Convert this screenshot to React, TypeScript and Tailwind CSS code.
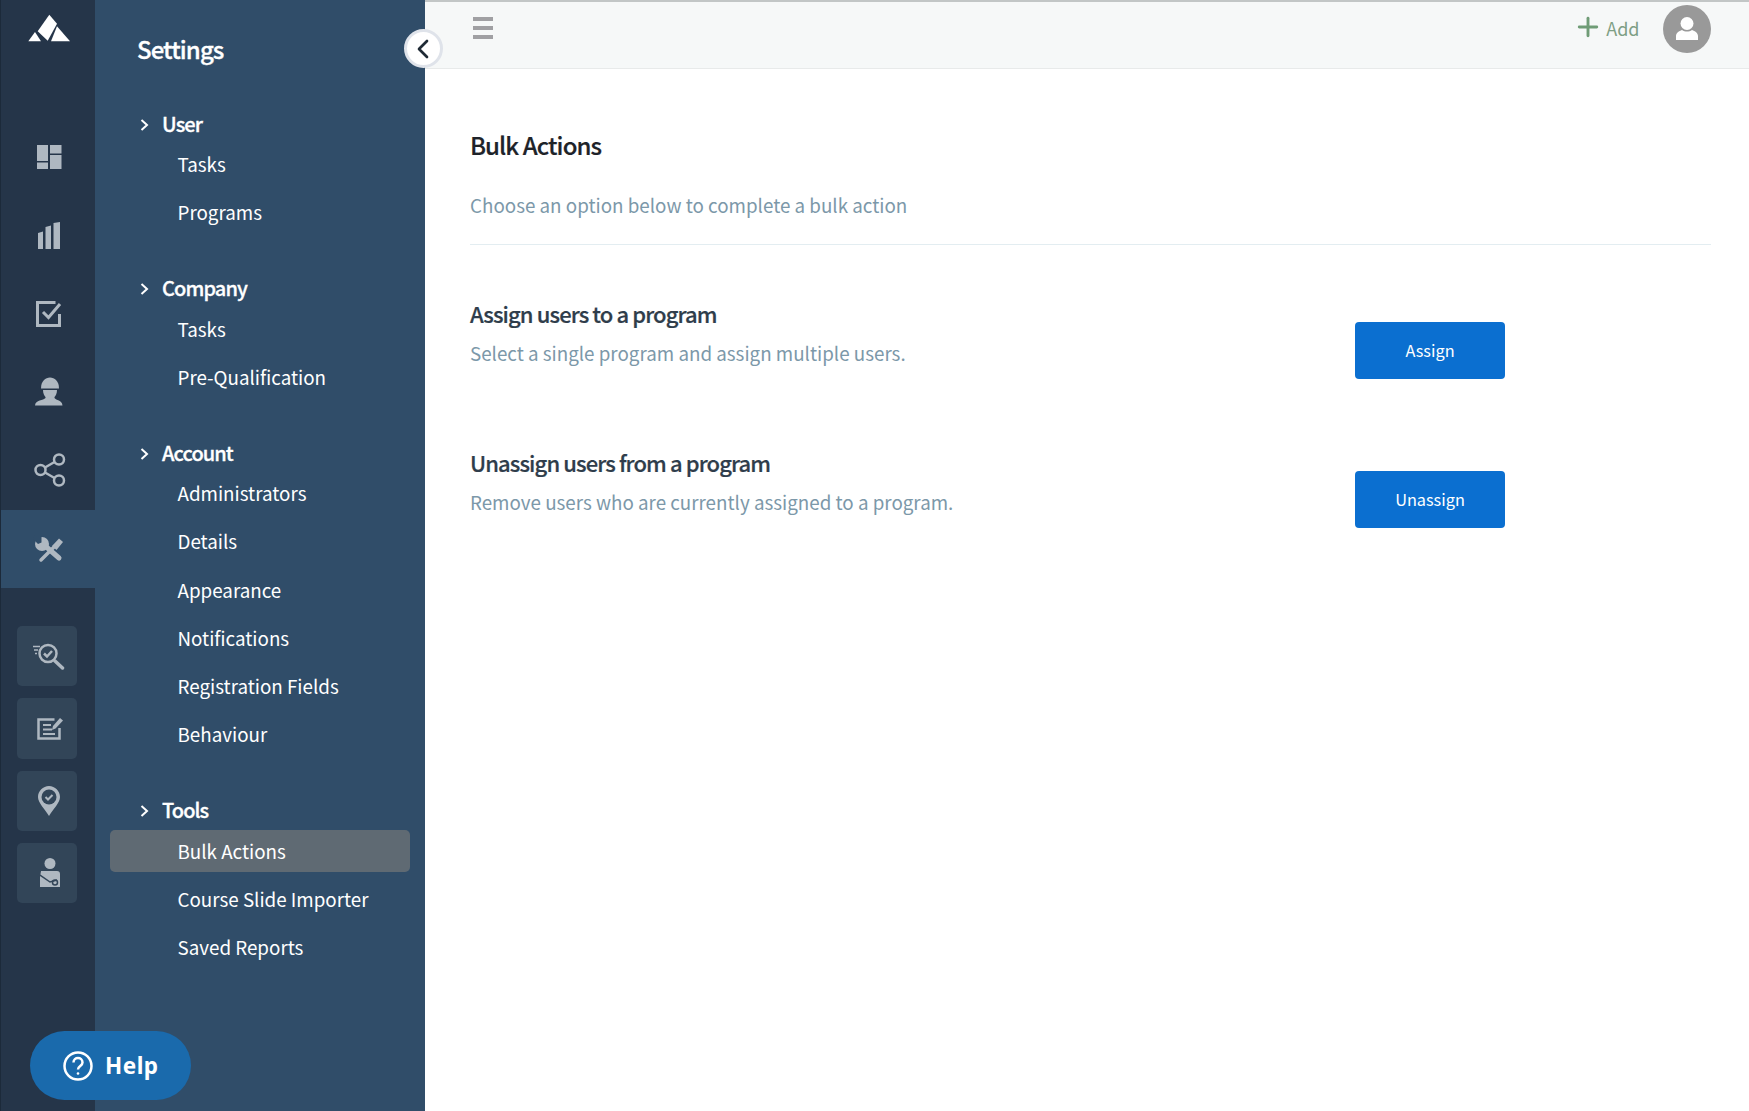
import { ChevronLeft, Plus } from "lucide-react";

const font = { fontFamily: '"Noto Sans CJK JP", "Noto Sans", sans-serif' };

const sections = [
  { title: "User", items: ["Tasks", "Programs"] },
  { title: "Company", items: ["Tasks", "Pre-Qualification"] },
  {
    title: "Account",
    items: ["Administrators", "Details", "Appearance", "Notifications", "Registration Fields", "Behaviour"],
  },
  { title: "Tools", items: ["Bulk Actions", "Course Slide Importer", "Saved Reports"] },
];

const iconFill = "#afb8c1";

function Logo() {
  return (
    <svg width="60" height="40" viewBox="0 0 60 40" fill="#fff">
      <path d="M28.3 6.7 L36 15.7 L26.7 32.7 L16.7 23.3 Z" />
      <path d="M7.3 33.3 L14 24 L20 33.300 Z" />
      <path d="M36 18.300 L49 33.300 L30 33.300 Z" />
    </svg>
  );
}

function Rail() {
  return (
    <div className="flex h-full w-[95px] shrink-0 flex-col border-l border-[#1c2a3a] bg-[#253549]">
      <div className="h-[118px] pl-[20px] pt-[8px]">
        <Logo />
      </div>
      <div className="flex h-[78px] items-center justify-center pl-[2px]">
        <svg width="25" height="24" viewBox="0 0 25 24" fill={iconFill}>
          <path d="M0 0h11v16H0zM0 17.500h11V24H0zM13 0h11.500v8.500H13zM13 10h11.500v14H13z" />
        </svg>
      </div>
      <div className="flex h-[78px] items-center justify-center pl-[2px]">
        <svg width="22" height="27" viewBox="0 0 22 27" fill={iconFill}>
          <path d="M0 11l5-1.500V27H0zM7.500 5l5.500-1.500V27H7.500zM15.500 1L22 0v27h-6.500z" />
        </svg>
      </div>
      <div className="flex h-[79px] items-center justify-center pl-[2px]">
        <svg width="26" height="26" viewBox="0 0 26 26" fill="none" stroke={iconFill} strokeWidth="3">
          <path d="M23.500 13v11.500H1.500V1.500h18" />
          <path d="M7 11l5.500 5.500L24 3" />
        </svg>
      </div>
      <div className="flex h-[78px] items-center justify-center pb-[4px] pl-[4px]">
        <svg width="50" height="40" viewBox="0 0 50 40" fill={iconFill}>
          <path d="M16 18.500C16 11 20.500 7.500 25 7.500S34 11 34 18.500Z" />
          <path d="M18 20H32C32 23.500 30.500 26 29.500 27V28C31 30.500 37 29.500 37.500 35.500H10C10.500 29.500 18.500 30.500 20.500 28V27C19.500 26 18 23.500 18 20Z" />
        </svg>
      </div>
      <div className="flex h-[79px] items-start justify-center pl-[3px] pt-[22px]">
        <svg width="32" height="34" viewBox="0 0 32 34" fill="none" stroke={iconFill} strokeWidth="2.500">
          <circle cx="25" cy="6.500" r="5" />
          <circle cx="6.500" cy="17" r="5" />
          <circle cx="25" cy="27.500" r="5" />
          <path d="M11 14.500l9.500-5.500M11 19.500l9.500 5.500" />
        </svg>
      </div>
      <div className="flex h-[78px] w-[95px] items-center justify-center bg-[#304d69] pl-[4px]">
        <svg width="50" height="40" viewBox="0 0 50 40">
          <path d="M17 15L33 29" stroke={iconFill} strokeWidth="5" strokeLinecap="round" />
          <circle cx="16" cy="15" r="7" fill={iconFill} />
          <path d="M9 6h6.500v7.500L12 15 7 10z" fill="#304d69" />
          <path d="M15 31L29 17" stroke={iconFill} strokeWidth="3.500" strokeLinecap="round" />
          <path d="M26 17L33 9.500l4 3.500-6.500 8z" fill={iconFill} />
        </svg>
      </div>

      <div className="mt-[38px] flex flex-col gap-[12px] pl-[16px]">
        <div className="flex h-[60px] w-[60px] items-center justify-center rounded-[5px] bg-[#324558] pl-[3px]">
          <svg width="32" height="27" viewBox="0 0 32 27" fill="none" stroke={iconFill} strokeWidth="2.500">
            <circle cx="15" cy="10.500" r="8.500" />
            <path d="M11 10.500l3 3 5-5.500" />
            <path d="M22 18l7.500 7" strokeWidth="3.500" strokeLinecap="round" />
            <path d="M0 3.500h7M1 7h4M2 10.500h2" strokeWidth="1.500" />
          </svg>
        </div>
        <div className="flex h-[61px] w-[60px] items-center justify-center rounded-[5px] bg-[#324558] pl-[5px]">
          <svg width="26" height="23" viewBox="0 0 26 23" fill="none" stroke={iconFill} strokeWidth="2.500">
            <path d="M22.500 11v10.500H1.500V2.500h16" />
            <path d="M6 8h8M6 12.500h9M6 17h12" strokeWidth="2" />
            <path d="M15 13l1-4L23 1l3 2.500-7.500 8z" fill={iconFill} stroke="none" />
          </svg>
        </div>
        <div className="flex h-[60px] w-[60px] items-center justify-center rounded-[5px] bg-[#324558] pl-[4px]">
          <svg width="22" height="30" viewBox="0 0 22 30">
            <path d="M11 0C5 0 0 5 0 11C0 17 7 23 11 30C15 23 22 17 22 11C22 5 17 0 11 0Z" fill={iconFill} />
            <circle cx="11" cy="11" r="7.500" fill="#324558" />
            <path d="M7.500 11l2.500 2.500 4.500-4.500" fill="none" stroke={iconFill} strokeWidth="2" />
          </svg>
        </div>
        <div className="flex h-[60px] w-[60px] items-center justify-center rounded-[5px] bg-[#324558] pl-[6px]">
          <svg width="20" height="30" viewBox="0 0 20 30" fill={iconFill}>
            <circle cx="10" cy="5.500" r="5.500" />
            <path d="M1 13h16a3 3 0 0 1 3 3v13H1zM0 19l1-6v16H0z" />
            <path d="M0 17l10 7 7-2" fill="none" stroke="#324558" strokeWidth="1.500" />
            <circle cx="15" cy="24.500" r="2.500" fill="none" stroke="#324558" strokeWidth="1.500" />
          </svg>
        </div>
      </div>
    </div>
  );
}

function Sidebar() {
  return (
    <div className="flex h-full w-[330px] shrink-0 flex-col bg-[#304d69] px-[15px] text-white">
      <div className="flex h-[67px] items-end pl-[27px] text-[24px] font-medium leading-[36px] tracking-[-0.9px] [-webkit-text-stroke:0.3px_#ffffff]">
        Settings
      </div>
      <div className="mt-[39.5px] flex flex-col gap-[37.5px]">
        {sections.map((s) => (
          <div key={s.title}>
            <div className="mb-[3px] flex h-[34px] items-center pl-[30px] text-[20px] font-medium tracking-[-0.9px] [-webkit-text-stroke:0.3px_#ffffff]">
              <svg width="9" height="12" viewBox="0 0 9 12" fill="none" stroke="#fff" strokeWidth="2" className="mr-[13px] mt-[2px] shrink-0">
                <path d="M1.500 1l5.500 5-5.500 5" />
              </svg>
              {s.title}
            </div>
            <div className="flex flex-col gap-[6.2px]">
              {s.items.map((item) => (
                <div
                  key={item}
                  className={
                    "flex h-[42px] items-center rounded-[5px] pb-[1px] pl-[67.5px] text-[18.8px] " +
                    (item === "Bulk Actions" ? "bg-[#5f6a73]" : "")
                  }
                >
                  {item}
                </div>
              ))}
            </div>
          </div>
        ))}
      </div>
    </div>
  );
}

function Row({ title, text, action }: { title: string; text: string; action: string }) {
  return (
    <div className="flex h-[149px]">
      <div className="w-[885px]">
        <div className="mt-[-1px] text-[22px] font-medium leading-[34px] tracking-[-0.9px] text-[#2f3d4b] [-webkit-text-stroke:0.2px_#2f3d4b]">
          {title}
        </div>
        <div className="mt-[6px] text-[18.8px] leading-[34px] text-[#7c98a9]">{text}</div>
      </div>
      <button className="mt-[25px] h-[57px] w-[150px] rounded-[4px] bg-[#0b6fd0] text-[16.3px] text-white">
        {action}
      </button>
    </div>
  );
}

export default function App() {
  return (
    <div className="relative flex h-[1111px] w-[1749px] overflow-hidden bg-white" style={font}>
      <Rail />
      <Sidebar />
      <div className="flex min-w-0 flex-1 flex-col">
        <div className="flex h-[69px] shrink-0 items-start justify-between border-t-2 border-b border-t-[#c2c6c6] border-b-[#e8eaea] bg-[#f6f8f8] pl-[48px] pr-[38px]">
          <div className="mt-[15px] flex h-[22px] w-[20px] flex-col justify-between">
            <div className="h-[4px] bg-[#a0a0a3]" />
            <div className="h-[4px] bg-[#a0a0a3]" />
            <div className="h-[4px] bg-[#a0a0a3]" />
          </div>
          <div className="flex items-center">
            <Plus size={30} strokeWidth={2.3} className="mt-[-1px] text-[#6f9c76]" />
            <span className="ml-[3px] mr-[23.5px] mt-[2px] text-[18px] text-[#7f9f85]">Add</span>
            <div className="mt-[3px] flex h-[48px] w-[48px] items-center justify-center rounded-full bg-[#999999]">
              <svg width="24" height="26" viewBox="0 0 24 26" fill="#fff">
                <circle cx="12" cy="7.500" r="6.500" />
                <path d="M7 14c-3 1-6 3-6 6v4h22v-4c0-3-3-5-6-6-3 2-7 2-10 0z" />
              </svg>
            </div>
          </div>
        </div>
        <div className="pl-[45px] pr-[38px]">
          <div className="mt-[56px] text-[24px] font-medium leading-[40px] tracking-[-0.9px] text-[#1e2329] [-webkit-text-stroke:0.2px_#1e2329]">
            Bulk Actions
          </div>
          <div className="mt-[21.5px] border-b border-[#e3edf1] pb-[21.5px] text-[18.8px] leading-[36px] text-[#7c98a9]">
            Choose an option below to complete a bulk action
          </div>
          <div className="mt-[52px]">
            <Row title="Assign users to a program" text="Select a single program and assign multiple users." action="Assign" />
            <Row title="Unassign users from a program" text="Remove users who are currently assigned to a program." action="Unassign" />
          </div>
        </div>
      </div>

      <button className="absolute left-[404px] top-[29px] flex h-[39px] w-[39px] items-center justify-center rounded-full border-[3px] border-[#dfe3ea] bg-white">
        <ChevronLeft size={32} strokeWidth={2} className="ml-[-2px] shrink-0 text-[#1f2a35]" />
      </button>

      <div className="absolute left-[30px] top-[1031px] flex h-[69px] w-[161px] items-center rounded-full bg-[#1a6aac] pl-[33px] text-white">
        <svg width="30" height="30" viewBox="0 0 30 30" fill="none" stroke="#fff" strokeWidth="2.500">
          <circle cx="15" cy="15" r="13.500" />
          <path d="M10.500 11.500c0-6 9-6 9 0 0 3.500-4.500 3.500-4.500 7" />
          <circle cx="15" cy="22.500" r="1.300" fill="#fff" stroke="none" />
        </svg>
        <span className="ml-[12px] text-[22.5px] font-bold tracking-[0.5px]" style={{ fontFamily: '"Noto Sans", sans-serif' }}>
          Help
        </span>
      </div>
    </div>
  );
}
